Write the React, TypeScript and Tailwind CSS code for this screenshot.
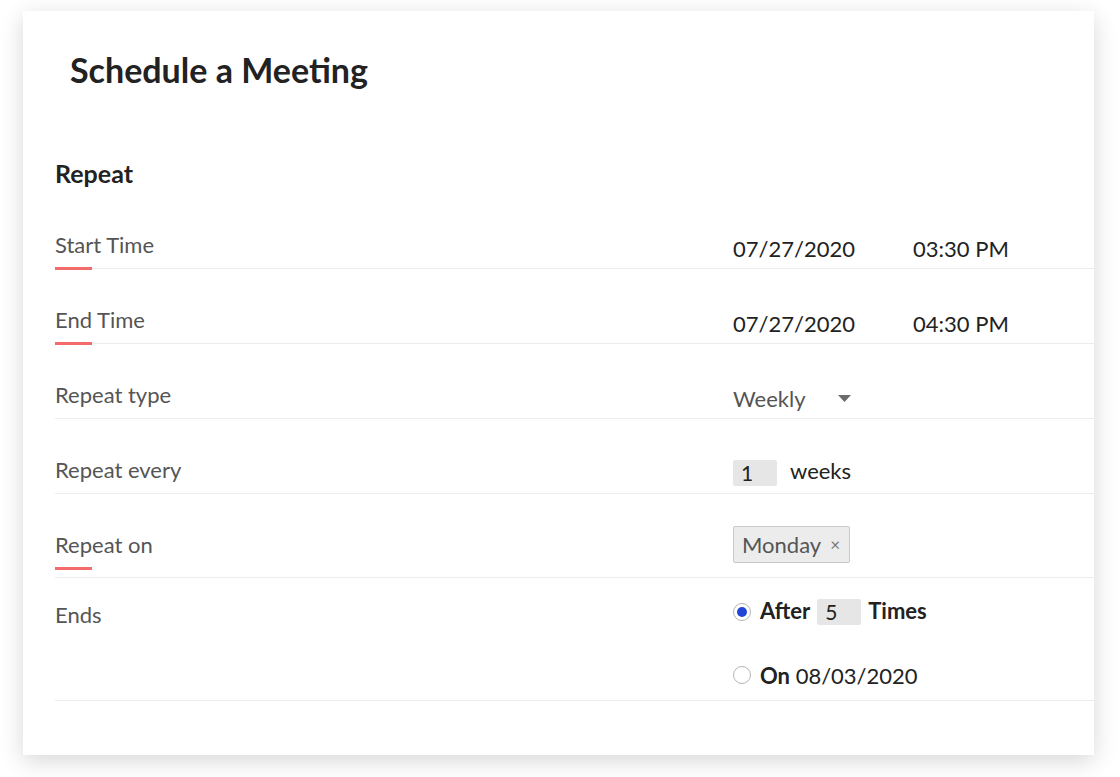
import { useState } from 'react'

type Row = {
  label: string
  required?: boolean
  height: string
  labelPad: string
  valuePad: string
  value: React.ReactNode
}

function NumberBox({ value }: { value: string }) {
  return (
    <span className="inline-flex h-[26px] w-[44px] items-end rounded-[2px] bg-[#e6e6e6] pb-[1px] pl-[8px] text-[21px] font-normal leading-[24px] text-[#222]">
      {value}
    </span>
  )
}

function Radio({ checked }: { checked: boolean }) {
  return (
    <span className="flex h-[18px] w-[18px] items-center justify-center rounded-full border border-[#b5b5b5] bg-white">
      {checked ? <span className="h-[10px] w-[10px] rounded-full bg-[#2046d8]" /> : null}
    </span>
  )
}

export default function App() {
  const [endsAfter] = useState(true)

  const rows: Row[] = [
    {
      label: 'Start Time',
      required: true,
      height: 'h-[75px]',
      labelPad: 'pt-[37px]',
      valuePad: 'pt-[41px]',
      value: (
        <div className="flex text-[22px] leading-[28px] text-[#222]">
          <span className="w-[180px]">07/27/2020</span>
          <span>03:30 PM</span>
        </div>
      ),
    },
    {
      label: 'End Time',
      required: true,
      height: 'h-[75px]',
      labelPad: 'pt-[37px]',
      valuePad: 'pt-[41px]',
      value: (
        <div className="flex text-[22px] leading-[28px] text-[#222]">
          <span className="w-[180px]">07/27/2020</span>
          <span>04:30 PM</span>
        </div>
      ),
    },
    {
      label: 'Repeat type',
      height: 'h-[75px]',
      labelPad: 'pt-[37px]',
      valuePad: 'pt-[41px]',
      value: (
        <div className="flex items-center text-[22px] leading-[28px] text-[#555]">
          <span className="w-[105px]">Weekly</span>
          <svg width="13" height="7" viewBox="0 0 13 7" className="mt-[-2px]">
            <path d="M0 0h13L6.5 7z" fill="#6b6b6b" />
          </svg>
        </div>
      ),
    },
    {
      label: 'Repeat every',
      height: 'h-[75px]',
      labelPad: 'pt-[37px]',
      valuePad: 'pt-[41px]',
      value: (
        <div className="flex items-center gap-[13px] text-[22px] leading-[26px] text-[#222]">
          <NumberBox value="1" />
          <span className="mt-[-4px]">weeks</span>
        </div>
      ),
    },
    {
      label: 'Repeat on',
      required: true,
      height: 'h-[84px]',
      labelPad: 'pt-[37px]',
      valuePad: 'pt-[32px]',
      value: (
        <span className="inline-flex h-[37px] items-center gap-[9px] rounded-[2px] border border-[#c9c9c9] bg-[#ececec] pl-[8px] pr-[9px] text-[22px] text-[#555]">
          Monday
          <span className="text-[17px] text-[#777]">×</span>
        </span>
      ),
    },
  ]

  return (
    <div className="min-h-[777px] bg-white pl-[23px] pt-[11px] font-['Lato',sans-serif]">
      <div className="h-[744px] w-[1071px] bg-white shadow-[0_6px_22px_rgba(0,0,0,0.16)]">
        <h1 className="pl-[47px] pt-[39px] text-[34px] font-bold leading-[40px] text-[#222]">
          Schedule a Meeting
        </h1>
        <div className="pl-[32px]">
          <h2 className="mt-[69px] text-[25px] font-bold leading-[28px] text-[#222]">Repeat</h2>
          <div className="mt-[7px]">
            {rows.map((row) => (
              <div key={row.label} className={`flex border-b border-[#ececec] ${row.height}`}>
                <div className={`w-[678px] ${row.labelPad}`}>
                  <div className="text-[22px] leading-[28px] text-[#555]">{row.label}</div>
                  {row.required ? <div className="mt-[8px] h-[3px] w-[37px] bg-[#f46b6b]" /> : null}
                </div>
                <div className={row.valuePad}>{row.value}</div>
              </div>
            ))}
            <div className="flex h-[123px] border-b border-[#ececec]">
              <div className="w-[678px] pt-[23px] text-[22px] leading-[28px] text-[#555]">Ends</div>
              <div className="pt-[21px]">
                <div className="flex h-[26px] items-center gap-[9px] text-[22px] text-[#222]">
                  <Radio checked={endsAfter} />
                  <span className="flex items-center gap-[7px] font-bold">
                    <span className="mt-[-4px]">After</span>
                    <NumberBox value="5" />
                    <span className="mt-[-4px]">Times</span>
                  </span>
                </div>
                <div className="mt-[37px] flex h-[26px] items-center gap-[9px] text-[22px] text-[#222]">
                  <Radio checked={!endsAfter} />
                  <span>
                    <span className="font-bold">On</span> 08/03/2020
                  </span>
                </div>
              </div>
            </div>
          </div>
        </div>
      </div>
    </div>
  )
}
